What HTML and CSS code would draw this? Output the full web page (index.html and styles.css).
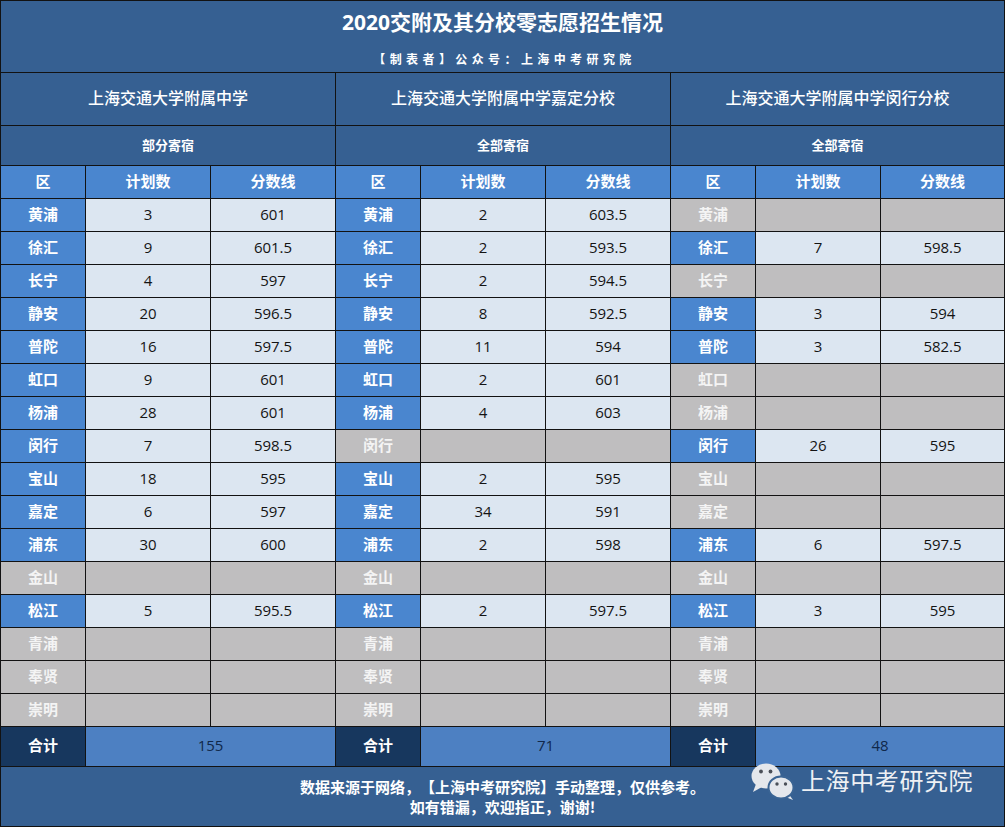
FILE: index.html
```html
<!DOCTYPE html>
<html lang="zh-CN">
<head>
<meta charset="utf-8">
<title>2020交附及其分校零志愿招生情况</title>
<link rel="stylesheet" href="styles.css">
</head>
<body>
<div class="sheet">
  <div class="cell title-cell">
    <div class="title">2020交附及其分校零志愿招生情况</div>
    <div class="subtitle">【制表者】公众号：上海中考研究院</div>
  </div>

  <div class="cell school">上海交通大学附属中学</div>
  <div class="cell school">上海交通大学附属中学嘉定分校</div>
  <div class="cell school">上海交通大学附属中学闵行分校</div>

  <div class="cell board">部分寄宿</div>
  <div class="cell board">全部寄宿</div>
  <div class="cell board">全部寄宿</div>

  <div class="cell head">区</div><div class="cell head">计划数</div><div class="cell head">分数线</div>
  <div class="cell head">区</div><div class="cell head">计划数</div><div class="cell head">分数线</div>
  <div class="cell head">区</div><div class="cell head">计划数</div><div class="cell head">分数线</div>

  <!-- 黄浦 -->
  <div class="cell dist">黄浦</div><div class="cell num">3</div><div class="cell num">601</div>
  <div class="cell dist">黄浦</div><div class="cell num">2</div><div class="cell num">603.5</div>
  <div class="cell dist off">黄浦</div><div class="cell empty"></div><div class="cell empty"></div>
  <!-- 徐汇 -->
  <div class="cell dist">徐汇</div><div class="cell num">9</div><div class="cell num">601.5</div>
  <div class="cell dist">徐汇</div><div class="cell num">2</div><div class="cell num">593.5</div>
  <div class="cell dist">徐汇</div><div class="cell num">7</div><div class="cell num">598.5</div>
  <!-- 长宁 -->
  <div class="cell dist">长宁</div><div class="cell num">4</div><div class="cell num">597</div>
  <div class="cell dist">长宁</div><div class="cell num">2</div><div class="cell num">594.5</div>
  <div class="cell dist off">长宁</div><div class="cell empty"></div><div class="cell empty"></div>
  <!-- 静安 -->
  <div class="cell dist">静安</div><div class="cell num">20</div><div class="cell num">596.5</div>
  <div class="cell dist">静安</div><div class="cell num">8</div><div class="cell num">592.5</div>
  <div class="cell dist">静安</div><div class="cell num">3</div><div class="cell num">594</div>
  <!-- 普陀 -->
  <div class="cell dist">普陀</div><div class="cell num">16</div><div class="cell num">597.5</div>
  <div class="cell dist">普陀</div><div class="cell num">11</div><div class="cell num">594</div>
  <div class="cell dist">普陀</div><div class="cell num">3</div><div class="cell num">582.5</div>
  <!-- 虹口 -->
  <div class="cell dist">虹口</div><div class="cell num">9</div><div class="cell num">601</div>
  <div class="cell dist">虹口</div><div class="cell num">2</div><div class="cell num">601</div>
  <div class="cell dist off">虹口</div><div class="cell empty"></div><div class="cell empty"></div>
  <!-- 杨浦 -->
  <div class="cell dist">杨浦</div><div class="cell num">28</div><div class="cell num">601</div>
  <div class="cell dist">杨浦</div><div class="cell num">4</div><div class="cell num">603</div>
  <div class="cell dist off">杨浦</div><div class="cell empty"></div><div class="cell empty"></div>
  <!-- 闵行 -->
  <div class="cell dist">闵行</div><div class="cell num">7</div><div class="cell num">598.5</div>
  <div class="cell dist off">闵行</div><div class="cell empty"></div><div class="cell empty"></div>
  <div class="cell dist">闵行</div><div class="cell num">26</div><div class="cell num">595</div>
  <!-- 宝山 -->
  <div class="cell dist">宝山</div><div class="cell num">18</div><div class="cell num">595</div>
  <div class="cell dist">宝山</div><div class="cell num">2</div><div class="cell num">595</div>
  <div class="cell dist off">宝山</div><div class="cell empty"></div><div class="cell empty"></div>
  <!-- 嘉定 -->
  <div class="cell dist">嘉定</div><div class="cell num">6</div><div class="cell num">597</div>
  <div class="cell dist">嘉定</div><div class="cell num">34</div><div class="cell num">591</div>
  <div class="cell dist off">嘉定</div><div class="cell empty"></div><div class="cell empty"></div>
  <!-- 浦东 -->
  <div class="cell dist">浦东</div><div class="cell num">30</div><div class="cell num">600</div>
  <div class="cell dist">浦东</div><div class="cell num">2</div><div class="cell num">598</div>
  <div class="cell dist">浦东</div><div class="cell num">6</div><div class="cell num">597.5</div>
  <!-- 金山 -->
  <div class="cell dist off">金山</div><div class="cell empty"></div><div class="cell empty"></div>
  <div class="cell dist off">金山</div><div class="cell empty"></div><div class="cell empty"></div>
  <div class="cell dist off">金山</div><div class="cell empty"></div><div class="cell empty"></div>
  <!-- 松江 -->
  <div class="cell dist">松江</div><div class="cell num">5</div><div class="cell num">595.5</div>
  <div class="cell dist">松江</div><div class="cell num">2</div><div class="cell num">597.5</div>
  <div class="cell dist">松江</div><div class="cell num">3</div><div class="cell num">595</div>
  <!-- 青浦 -->
  <div class="cell dist off">青浦</div><div class="cell empty"></div><div class="cell empty"></div>
  <div class="cell dist off">青浦</div><div class="cell empty"></div><div class="cell empty"></div>
  <div class="cell dist off">青浦</div><div class="cell empty"></div><div class="cell empty"></div>
  <!-- 奉贤 -->
  <div class="cell dist off">奉贤</div><div class="cell empty"></div><div class="cell empty"></div>
  <div class="cell dist off">奉贤</div><div class="cell empty"></div><div class="cell empty"></div>
  <div class="cell dist off">奉贤</div><div class="cell empty"></div><div class="cell empty"></div>
  <!-- 崇明 -->
  <div class="cell dist off">崇明</div><div class="cell empty"></div><div class="cell empty"></div>
  <div class="cell dist off">崇明</div><div class="cell empty"></div><div class="cell empty"></div>
  <div class="cell dist off">崇明</div><div class="cell empty"></div><div class="cell empty"></div>

  <div class="cell total-label">合计</div><div class="cell total-value">155</div>
  <div class="cell total-label">合计</div><div class="cell total-value">71</div>
  <div class="cell total-label">合计</div><div class="cell total-value">48</div>

  <div class="cell footer">
    <p class="note">数据来源于网络，【上海中考研究院】手动整理，仅供参考。</p>
    <p class="note">如有错漏，欢迎指正，谢谢!</p>
    <div class="watermark">
      <svg class="wm-logo" width="46" height="40" viewBox="0 0 46 40" aria-hidden="true">
        <path d="M6 22 L3 30 L12 25 Z" fill="#e4e7ec"/>
        <ellipse cx="16" cy="14" rx="14.5" ry="12.5" fill="#e4e7ec"/>
        <circle cx="11" cy="9.5" r="1.9" fill="#4a4f58"/>
        <circle cx="20.5" cy="9.5" r="1.9" fill="#4a4f58"/>
        <path d="M38 31 L43 38 L33 34 Z" fill="#e4e7ec"/>
        <ellipse cx="31" cy="25.5" rx="12.5" ry="11" fill="#e4e7ec" stroke="#3a6494" stroke-width="2"/>
        <circle cx="27" cy="22" r="1.7" fill="#4a4f58"/>
        <circle cx="35.5" cy="22" r="1.7" fill="#4a4f58"/>
      </svg>
      <span class="wm-text">上海中考研究院</span>
    </div>
  </div>
</div>
</body>
</html>
```

FILE: styles.css
```css
html, body {
  margin: 0;
  padding: 0;
  background: #ffffff;
}

body {
  font-family: "Noto Sans CJK SC", "Noto Sans", sans-serif;
  color: #ffffff;
  text-spacing-trim: space-all;
}

.sheet {
  display: grid;
  grid-template-columns: 84px 124px 124px 84px 124px 124px 84px 124px 123px;
  grid-template-rows: 71px 52px 39px 32px repeat(16, 32px) 39px 59px;
  gap: 1px;
  padding: 1px;
  background: #121212;
  width: max-content;
}

.cell {
  display: flex;
  align-items: center;
  justify-content: center;
  text-align: center;
  line-height: 1;
  padding-bottom: 4px;
}

.title-cell {
  grid-column: 1 / -1;
  flex-direction: column;
  justify-content: flex-start;
  background: #366092;
  padding-bottom: 0;
}

.title {
  margin-top: 6px;
  height: 30px;
  line-height: 30px;
  font-family: "Open Sans", "Noto Sans CJK SC", sans-serif;
  font-size: 21px;
  font-weight: 700;
}

.subtitle {
  margin-top: 14px;
  height: 16px;
  line-height: 16px;
  font-size: 12px;
  font-weight: 700;
  letter-spacing: 4.4px;
  padding-left: 4px;
}

.school {
  grid-column: span 3;
  background: #366092;
  font-size: 16px;
  font-weight: 500;
}

.board {
  grid-column: span 3;
  background: #366092;
  font-size: 13px;
  font-weight: 700;
  padding-bottom: 3px;
}

.head {
  background: #4a86cf;
  font-size: 15px;
  font-weight: 700;
}

.dist {
  background: #4a86cf;
  font-size: 15px;
  font-weight: 700;
}

.dist.off {
  background: #bfbebf;
  color: #f4f4f4;
}

.num {
  background: #dce6f1;
  color: #141414;
  font-family: "Open Sans", sans-serif;
  font-size: 15px;
  padding-bottom: 2px;
}

.empty {
  background: #bfbebf;
}

.total-label {
  background: #17375e;
  font-size: 15px;
  font-weight: 700;
}

.total-value {
  grid-column: span 2;
  background: #4d80c2;
  color: #10284a;
  font-family: "Open Sans", sans-serif;
  font-size: 15px;
  padding-bottom: 2px;
}

.footer {
  grid-column: 1 / -1;
  position: relative;
  flex-direction: column;
  justify-content: flex-start;
  background: #366092;
  padding-top: 10px;
  padding-bottom: 0;
}

.note {
  margin: 0;
  line-height: 20px;
  font-size: 15px;
  font-weight: 700;
}

.watermark {
  position: absolute;
  left: 749px;
  top: -5px;
  display: flex;
  align-items: flex-start;
  gap: 5px;
}

.wm-logo {
  display: block;
}

.wm-text {
  margin-top: 2px;
  font-size: 24px;
  line-height: 32px;
  font-weight: 400;
  color: #eef0f4;
  letter-spacing: 0.6px;
}
```
